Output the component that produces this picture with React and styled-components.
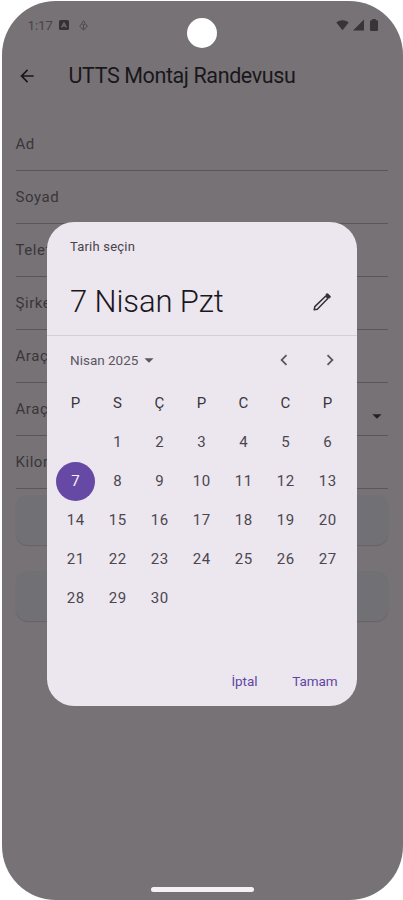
import React from 'react';
import styled, { createGlobalStyle } from 'styled-components';
import {
  MdArrowBack,
  MdArrowDropDown,
  MdChevronLeft,
  MdChevronRight,
} from 'react-icons/md';

const FIELDS = [
  { label: 'Ad' },
  { label: 'Soyad' },
  { label: 'Telefon' },
  { label: 'Şirket' },
  { label: 'Araç' },
  { label: 'Araç', select: true },
  { label: 'Kilometre' },
];

const WEEKDAYS = ['P', 'S', 'Ç', 'P', 'C', 'C', 'P'];
const DAYS = Array.from({ length: 30 }, (_, i) => i + 1);
const SELECTED_DAY = 7;

const GlobalStyle = createGlobalStyle`
  * {
    box-sizing: border-box;
  }

  body {
    margin: 0;
    background: #ffffff;
    font-family: Roboto, sans-serif;
  }
`;

const Phone = styled.div`
  position: relative;
  width: 403px;
  height: 900px;
  overflow: hidden;
  padding: 1px 0.5px 0 1.5px;
`;

const Screen = styled.div`
  height: 899px;
  border-radius: 54px;
  background: #777276;
  display: flex;
  flex-direction: column;
  overflow: hidden;
`;

const StatusBar = styled.div`
  height: 48px;
  padding: 0 25px 0 26px;
  display: flex;
  align-items: center;
  justify-content: space-between;
  color: #37343a;
`;

const StatusGroup = styled.div`
  display: flex;
  align-items: center;
  gap: ${props => props.$gap || 0}px;

  svg {
    display: block;
    flex-shrink: 0;
  }
`;

const Clock = styled.span`
  width: 25px;
  font-size: 13.5px;
  letter-spacing: -0.2px;
  white-space: nowrap;
  color: #48444a;
`;

const Camera = styled.div`
  position: absolute;
  top: 17.5px;
  left: 187px;
  width: 30px;
  height: 30px;
  border-radius: 50%;
  background: #ffffff;
`;

const AppBar = styled.header`
  height: 53px;
  padding-left: 15px;
  display: flex;
  align-items: center;
  gap: 32px;
  color: #19171b;
`;

const AppTitle = styled.h1`
  margin: 0;
  font-size: 21.5px;
  font-weight: 400;
  letter-spacing: -0.4px;
`;

const Form = styled.form`
  flex: 1;
  padding: 16px 14.5px 0 14px;
  display: flex;
  flex-direction: column;
`;

const Field = styled.div`
  height: 53px;
  border-bottom: 1.5px solid #5a565a;
  display: flex;
  align-items: center;
  justify-content: space-between;
  font-size: 15px;
  letter-spacing: 0.55px;
  color: #39363b;

  svg {
    position: relative;
    top: 7px;
    color: #232025;
  }
`;

const FormButton = styled.button`
  height: 50px;
  margin: ${props => props.$top}px 0 0;
  flex-shrink: 0;
  border: 0;
  border-radius: 12px;
  background: #717175;
  box-shadow: 0 1px 1px #656267;
`;

const HomeIndicator = styled.div`
  width: 103px;
  height: 4.5px;
  margin: 0 auto 8.5px;
  border-radius: 3px;
  background: #f4f2f4;
`;

const Overlay = styled.div`
  position: absolute;
  inset: 0;
  padding: 222px 0 0 47px;
`;

const Dialog = styled.section`
  width: 309.5px;
  height: 483.5px;
  border-radius: 27px;
  background: #ece6ee;
  display: flex;
  flex-direction: column;
`;

const DialogHeader = styled.header`
  height: 114px;
  padding: 16px 26px 0 23px;
  border-bottom: 1px solid #d5d0d8;
`;

const Caption = styled.div`
  font-size: 13px;
  line-height: 18px;
  letter-spacing: 0.2px;
  color: #48444b;
`;

const Headline = styled.div`
  margin-top: 25.5px;
  display: flex;
  align-items: center;
  justify-content: space-between;
  font-size: 31px;
  font-weight: 350;
  line-height: 40px;
  letter-spacing: -0.1px;
  color: #1a171d;
`;

const MonthBar = styled.div`
  height: 47.5px;
  padding: 0 15.5px 0 23px;
  display: flex;
  align-items: center;
  color: #5b5760;
`;

const MonthName = styled.span`
  flex: 1;
  display: flex;
  align-items: center;
  font-size: 13.5px;
  letter-spacing: 0;
`;

const MonthNav = styled.div`
  display: flex;
  gap: 24px;
`;

const Calendar = styled.div`
  padding: 0 7.5px;
  display: grid;
  grid-template-columns: repeat(7, 42px);
  grid-auto-rows: 39px;
  place-items: center;
`;

const Cell = styled.div`
  width: 39px;
  height: 39px;
  border-radius: 50%;
  display: flex;
  align-items: center;
  justify-content: center;
  font-size: 15px;
  letter-spacing: 0.5px;
  text-indent: 0.5px;
  color: ${props => (props.$selected ? '#f7f2fa' : props.$heading ? '#39353d' : '#4b4750')};
  background: ${props => (props.$selected ? '#6549a5' : 'transparent')};
  grid-column-start: ${props => props.$column || 'auto'};
`;

const Actions = styled.footer`
  margin-top: auto;
  height: 50px;
  padding-right: 19px;
  display: flex;
  justify-content: flex-end;
  gap: 35px;
`;

const ActionText = styled.span`
  font-size: 13.5px;
  font-weight: 400;
  line-height: 50px;
  letter-spacing: -0.1px;
  color: #5f46a3;
`;

const AppBadge = () => (
  <svg width="10" height="10" viewBox="0 0 10 10">
    <rect width="10" height="10" rx="1.5" fill="#343137" />
    <path d="M2.5 7.5 5 3l2.5 4.5M3.8 6h2.4" fill="none" stroke="#777276" strokeWidth="1.1" />
  </svg>
);

const DebugMark = () => (
  <svg width="9" height="11" viewBox="0 0 9 11" fill="none" stroke="#4a464c" strokeWidth="1">
    <path d="M4.5.8 6.3 3.6 4.5 5 2.7 3.6ZM2.5 4 .7 6.2l3.8 4 3.8-4L6.5 4M4.5 5v4" />
  </svg>
);

const WifiMark = () => (
  <svg width="13" height="12" viewBox="0 0 14 12">
    <path d="M.3 3.2C4 .2 10 .2 13.7 3.2L7 11.7Z" fill="currentColor" />
  </svg>
);

const SignalMark = () => (
  <svg width="11" height="12" viewBox="0 0 11 12">
    <path d="M11 .5V11.5H0Z" fill="currentColor" />
  </svg>
);

const BatteryMark = () => (
  <svg width="8" height="12" viewBox="0 0 8 12">
    <path d="M2.3 0h3.4v1.2H7a1 1 0 0 1 1 1V11a1 1 0 0 1-1 1H1a1 1 0 0 1-1-1V2.2a1 1 0 0 1 1-1h1.3Z" fill="currentColor" />
  </svg>
);

const PencilMark = () => (
  <svg width="18" height="18" viewBox="0 0 18 18" fill="none" stroke="#343037" strokeLinejoin="round">
    <path d="M1.2 16.8 1.8 13.6 12.8 3 15 5.2 4.3 16.2Z" strokeWidth="1.5" />
    <path d="M14.2 1.8 16.2 3.8" strokeWidth="3" strokeLinecap="round" />
  </svg>
);

const App = () => {
  return (
    <>
      <GlobalStyle />
      <Phone>
        <Screen>
          <StatusBar>
            <StatusGroup $gap={6}>
              <Clock>1:17</Clock>
              <StatusGroup $gap={10}>
                <AppBadge />
                <DebugMark />
              </StatusGroup>
            </StatusGroup>
            <StatusGroup $gap={4}>
              <WifiMark />
              <StatusGroup $gap={6}>
                <SignalMark />
                <BatteryMark />
              </StatusGroup>
            </StatusGroup>
          </StatusBar>
          <AppBar>
            <MdArrowBack size={20} />
            <AppTitle>UTTS Montaj Randevusu</AppTitle>
          </AppBar>
          <Form>
            {FIELDS.map((field, index) => (
              <Field key={index}>
                {field.label}
                {field.select && <MdArrowDropDown size={22} />}
              </Field>
            ))}
            <FormButton type="button" $top={6} />
            <FormButton type="button" $top={26} />
          </Form>
          <HomeIndicator />
        </Screen>
        <Camera />
        <Overlay>
          <Dialog>
            <DialogHeader>
              <Caption>Tarih seçin</Caption>
              <Headline>
                7 Nisan Pzt
                <PencilMark />
              </Headline>
            </DialogHeader>
            <MonthBar>
              <MonthName>
                Nisan 2025
                <MdArrowDropDown size={22} />
              </MonthName>
              <MonthNav>
                <MdChevronLeft size={22} />
                <MdChevronRight size={22} />
              </MonthNav>
            </MonthBar>
            <Calendar>
              {WEEKDAYS.map((day, index) => (
                <Cell key={index} $heading>
                  {day}
                </Cell>
              ))}
              {DAYS.map(day => (
                <Cell key={day} $column={day === 1 ? 2 : undefined} $selected={day === SELECTED_DAY}>
                  {day}
                </Cell>
              ))}
            </Calendar>
            <Actions>
              <ActionText>İptal</ActionText>
              <ActionText>Tamam</ActionText>
            </Actions>
          </Dialog>
        </Overlay>
      </Phone>
    </>
  );
};

export default App;
